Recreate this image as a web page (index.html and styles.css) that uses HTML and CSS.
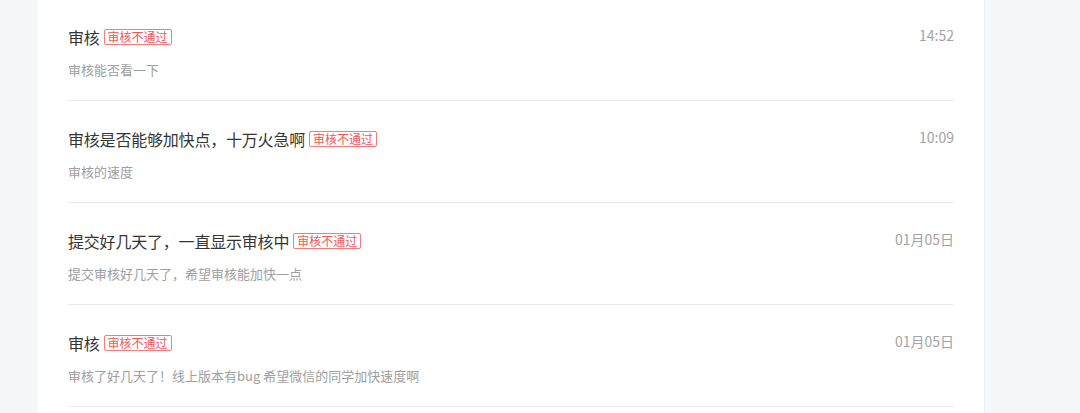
FILE: index.html
```html
<!DOCTYPE html>
<html lang="zh-CN">
<head>
    <meta charset="UTF-8">
    <meta name="viewport" content="width=device-width, initial-scale=1.0">
    <title>反馈列表</title>
    <link rel="stylesheet" href="styles.css">
</head>
<body>
    <div class="feedback-card">
        <div class="feedback-item">
            <div class="item-head">
                <div class="item-title">审核<span class="tag-fail">审核不通过</span></div>
                <div class="item-time">14:52</div>
            </div>
            <p class="item-desc">审核能否看一下</p>
        </div>
        <div class="feedback-item">
            <div class="item-head">
                <div class="item-title">审核是否能够加快点，十万火急啊<span class="tag-fail">审核不通过</span></div>
                <div class="item-time">10:09</div>
            </div>
            <p class="item-desc">审核的速度</p>
        </div>
        <div class="feedback-item">
            <div class="item-head">
                <div class="item-title">提交好几天了，一直显示审核中<span class="tag-fail">审核不通过</span></div>
                <div class="item-time">01月05日</div>
            </div>
            <p class="item-desc">提交审核好几天了，希望审核能加快一点</p>
        </div>
        <div class="feedback-item">
            <div class="item-head">
                <div class="item-title">审核<span class="tag-fail">审核不通过</span></div>
                <div class="item-time">01月05日</div>
            </div>
            <p class="item-desc">审核了好几天了！线上版本有bug 希望微信的同学加快速度啊</p>
        </div>
    </div>
</body>
</html>
```

FILE: styles.css
```css
body {
    font-family: "Noto Sans CJK SC", "Noto Sans", sans-serif;
    background: #f6f7f9;
    margin: 0;
    padding: 0;
}

.feedback-card {
    background-color: #fff;
    margin-top: -1px;
    margin-left: 38px;
    width: 886px;
    padding: 0 30px;
    border-right: 1px solid #eceef0;
    min-height: 414px;
}

.feedback-item {
    padding: 28px 0 21px;
    border-bottom: 1px solid #ebebeb;
}

.item-head {
    display: flex;
    justify-content: space-between;
    align-items: flex-start;
}

.item-title {
    font-size: 16px;
    line-height: 20px;
    color: #353535;
    display: flex;
    align-items: center;
    letter-spacing: -0.2px;
}

.tag-fail {
    font-size: 12px;
    line-height: 14px;
    color: #f25656;
    border: 1px solid #f57a7a;
    border-radius: 2px;
    padding: 0 3px;
    margin-left: 4px;
    letter-spacing: 0;
}

.item-time {
    font-size: 14px;
    line-height: 16px;
    color: #a3a3a3;
}

.item-desc {
    margin: 14px 0 0;
    font-size: 13px;
    line-height: 18px;
    color: #a0a0a0;
}
```
